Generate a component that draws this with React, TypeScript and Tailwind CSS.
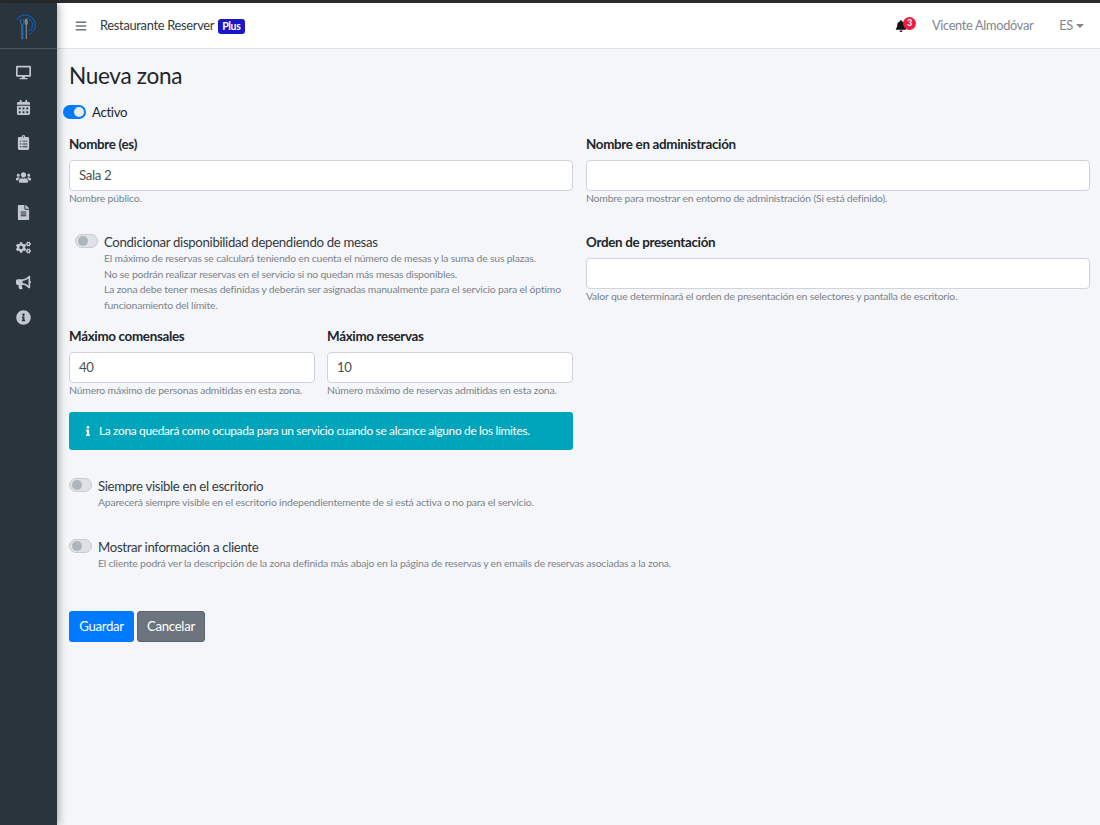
import { FaBars, FaBell, FaBullhorn, FaCalendarAlt, FaClipboardList, FaCogs, FaDesktop, FaFileAlt, FaInfo, FaInfoCircle, FaUsers } from "react-icons/fa";

const navIcons = [FaDesktop, FaCalendarAlt, FaClipboardList, FaUsers, FaFileAlt, FaCogs, FaBullhorn, FaInfoCircle];

function Logo() {
  return (
    <svg width="24" height="30" viewBox="0 0 24 30" fill="none">
      <path d="M5 8.500A10 10 0 1 1 17 23.400" stroke="#0d5aa6" strokeWidth="1.200" />
      <path d="M13.500 7A7 7 0 0 1 16.500 20.300" stroke="#0d5aa6" strokeWidth="1.200" />
      <path d="M8.700 8v3.500c0 .8.500 1.500 1 1.800V28h1.200V13.300c.5-.3 1-1 1-1.800V8" stroke="#1a7fe0" strokeWidth="0.900" />
      <ellipse cx="14.300" cy="11" rx="1.600" ry="3.200" fill="#7b858d" />
      <rect x="13.700" y="13" width="1.200" height="15" fill="#7b858d" />
    </svg>
  );
}

function Toggle({ on = false }: { on?: boolean }) {
  return on ? (
    <span className="flex h-[14px] w-[23px] shrink-0 items-center justify-end rounded-full bg-[#007bff] pr-[2px]">
      <span className="h-[10px] w-[10px] rounded-full bg-[#e9ecef]" />
    </span>
  ) : (
    <span className="flex h-[14px] w-[23px] shrink-0 items-center rounded-full border border-[#c6ccd2] bg-[#dee2e6] pl-[2px]">
      <span className="h-[10px] w-[10px] rounded-full bg-[#adb5bd]" />
    </span>
  );
}

function Field({ label, value = "", help }: { label: string; value?: string; help: string }) {
  return (
    <div className="flex flex-col">
      <label className="text-[13.400px] leading-[20px] font-bold text-[#212529]">{label}</label>
      <div className="mt-[6px] flex h-[31px] items-center rounded-[4px] border border-[#ced4da] bg-white px-[9px] text-[13.200px] text-[#495057]">
        {value}
      </div>
      <p className="text-[10.400px] leading-[15px] tracking-[-0.017em] text-[#7b838a]">{help}</p>
    </div>
  );
}

export default function App() {
  return (
    <div className="flex min-h-[825px] flex-col bg-[#f4f6f9] font-['Lato',sans-serif] tracking-[-0.02em] text-[#212529]">
      <div className="h-[3px] bg-[#2c2c2c]" />
      <div className="flex flex-1">
        <aside className="relative w-[57px] shrink-0 bg-[#2a343d] shadow-[2px_0_8px_rgba(0,0,0,0.3)]">
          <div className="flex h-[46px] items-center justify-center border-b border-[#4b545c] pr-[10px]">
            <Logo />
          </div>
          <nav className="mt-[6px] flex flex-col items-center pr-[11px]">
            {navIcons.map((Icon, i) => (
              <div key={i} className="flex h-[35px] items-center justify-center text-[#c2c7d0]">
                <Icon size={15} />
              </div>
            ))}
          </nav>
        </aside>

        <main className="min-w-0 flex-1">
          <header className="flex h-[46px] items-center border-b border-[#dee2e6] bg-white pr-[16px] pl-[18px]">
            <FaBars size={12} className="text-[#6c757d]" />
            <span className="ml-[13px] pt-[1px] text-[12.900px] text-[#343a40]">Restaurante Reserver</span>
            <span className="mt-[2px] ml-[4px] rounded-[3px] bg-[#1a17c4] px-[4px] text-[10.500px] leading-[15px] font-bold text-white">Plus</span>
            <div className="relative mr-[25px] ml-auto">
              <FaBell size={12} className="text-[#111]" />
              <span className="absolute top-[-3px] left-[8px] flex h-[13px] w-[13px] items-center justify-center rounded-full bg-[#f01a3c] text-[9px] font-bold text-white">3</span>
            </div>
            <span className="pt-[1px] text-[12.800px] text-[#7f868d]">Vicente Almodóvar</span>
            <span className="ml-[26px] pt-[1px] text-[12.800px] text-[#7f868d]">ES</span>
            <span className="ml-[3px] h-0 w-0 border-x-[4px] border-t-[4px] border-x-transparent border-t-[#7f868d]" />
          </header>

          <div className="pt-[10px] pr-[10px] pl-[12px]">
            <h1 className="text-[22.600px] leading-[34px] text-[#212529]">Nueva zona</h1>
            <div className="mt-[10px] -ml-[6px] flex items-center gap-[6px]">
              <Toggle on />
              <span className="text-[13.200px] leading-[18px]">Activo</span>
            </div>

            <div className="mt-[13px] grid grid-cols-2 gap-x-[13px]">
              <div className="flex flex-col">
                <Field label="Nombre (es)" value="Sala 2" help="Nombre público." />

                <div className="mt-[28px] ml-[6px] flex gap-[6px]">
                  <Toggle />
                  <div>
                    <p className="text-[13.200px] leading-[16px] text-[#343a40]">Condicionar disponibilidad dependiendo de mesas</p>
                    <p className="mt-[1px] text-[10.400px] leading-[15.500px] tracking-[-0.017em] text-[#7b838a]">
                      El máximo de reservas se calculará teniendo en cuenta el número de mesas y la suma de sus plazas.
                      <br />
                      No se podrán realizar reservas en el servicio si no quedan más mesas disponibles.
                      <br />
                      La zona debe tener mesas definidas y deberán ser asignadas manualmente para el servicio para el óptimo funcionamiento del límite.
                    </p>
                  </div>
                </div>

                <div className="mt-[13px] grid grid-cols-2 gap-x-[12px]">
                  <Field label="Máximo comensales" value="40" help="Número máximo de personas admitidas en esta zona." />
                  <Field label="Máximo reservas" value="10" help="Número máximo de reservas admitidas en esta zona." />
                </div>

                <div className="mt-[14px] flex h-[38px] items-center rounded-[3px] bg-[#00a5bb] pl-[14px] text-[11.900px] text-white">
                  <FaInfo size={10} />
                  <span className="ml-[6px]">La zona quedará como ocupada para un servicio cuando se alcance alguno de los límites.</span>
                </div>

                <div className="mt-[28px] flex gap-[6px]">
                  <Toggle />
                  <div>
                    <p className="text-[13.200px] leading-[16px] text-[#343a40]">Siempre visible en el escritorio</p>
                    <p className="mt-[1px] whitespace-nowrap text-[10.400px] leading-[15.500px] tracking-[-0.017em] text-[#7b838a]">Aparecerá siempre visible en el escritorio independientemente de si está activa o no para el servicio.</p>
                  </div>
                </div>

                <div className="mt-[28px] flex gap-[6px]">
                  <Toggle />
                  <div>
                    <p className="text-[13.200px] leading-[16px] text-[#343a40]">Mostrar información a cliente</p>
                    <p className="mt-[1px] whitespace-nowrap text-[10.400px] leading-[15.500px] tracking-[-0.017em] text-[#7b838a]">El cliente podrá ver la descripción de la zona definida más abajo en la página de reservas y en emails de reservas asociadas a la zona.</p>
                  </div>
                </div>

                <div className="mt-[40px] flex gap-[3px]">
                  <button className="h-[31px] w-[65px] rounded-[3px] bg-[#007bff] text-[13.200px] text-white">Guardar</button>
                  <button className="h-[31px] w-[68px] rounded-[3px] border border-[#5c656c] bg-[#6c757d] text-[13.200px] text-white">Cancelar</button>
                </div>
              </div>

              <div className="flex flex-col">
                <Field label="Nombre en administración" help="Nombre para mostrar en entorno de administración (Si está definido)." />
                <div className="mt-[26px]">
                  <Field label="Orden de presentación" help="Valor que determinará el orden de presentación en selectores y pantalla de escritorio." />
                </div>
              </div>
            </div>
          </div>
        </main>
      </div>
    </div>
  );
}
